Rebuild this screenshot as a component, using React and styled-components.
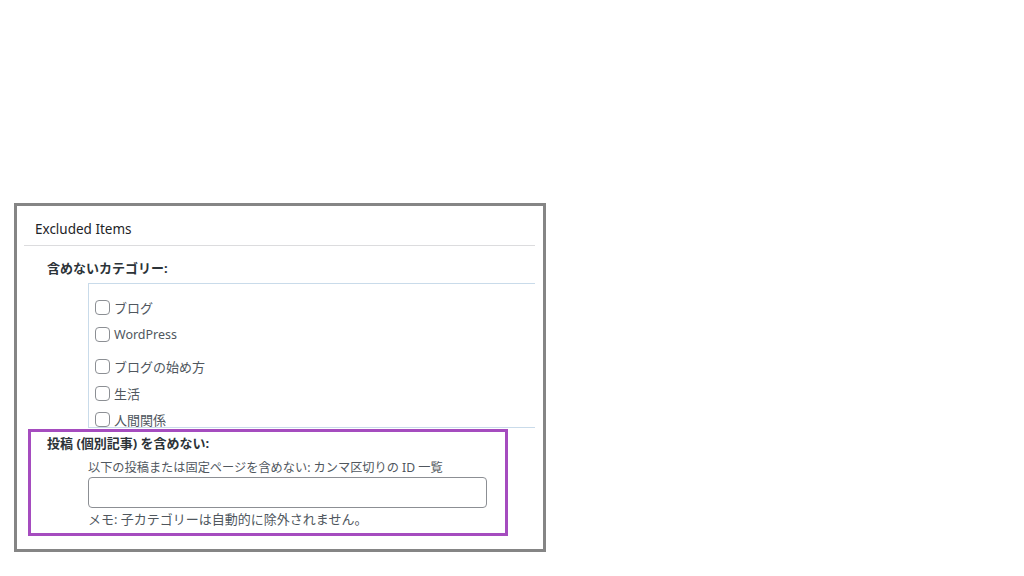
import React from 'react';
import styled, { createGlobalStyle } from 'styled-components';

const GlobalStyle = createGlobalStyle`
  html, body {
    margin: 0;
    padding: 0;
    background: #ffffff;
  }
  body {
    font-family: "Noto Sans", "Noto Sans CJK JP", sans-serif;
    color: #2c3338;
  }
`;

const Page = styled.div`
  width: 1024px;
  height: 576px;
  padding: 203px 0 0 14px;
  box-sizing: border-box;
`;

const Frame = styled.div`
  width: 532px;
  height: 349px;
  box-sizing: border-box;
  border: 3px solid #858585;
  background: #fff;
  padding: 0 8px 0 7px;
  overflow: hidden;
`;

const PanelHead = styled.div`
  height: 40px;
  box-sizing: border-box;
  padding: 14px 0 0 11px;
  border-bottom: 1px solid #dcdcde;
  font-size: 13.5px;
  line-height: 18px;
  color: #1d2327;
`;

const FieldLabel = styled.div`
  font-weight: bold;
  font-size: 13px;
  line-height: 18px;
  color: #2c3338;
  padding-left: ${p => p.$indent}px;
  margin-top: ${p => p.$top}px;
`;

const CategoryList = styled.div`
  margin: 6px 0 0 64px;
  height: 145px;
  border: 1px solid #c9dbea;
  border-right: none;
  box-sizing: border-box;
  padding: 14px 0 0 6px;
  overflow: hidden;
`;

const CheckRow = styled.label`
  display: flex;
  align-items: center;
  gap: 4px;
  height: 18px;
  margin-bottom: ${p => p.$gap}px;
  font-size: ${p => (p.$latin ? 12.5 : 13)}px;
  color: #50575e;
`;

const Box = styled.span`
  display: block;
  width: 15px;
  height: 15px;
  box-sizing: border-box;
  border: 1px solid #8c8f94;
  border-radius: 4px;
  background: #fff;
  flex: none;
`;

const Highlight = styled.div`
  margin: 1px 0 0 4px;
  width: 480px;
  height: 107px;
  box-sizing: border-box;
  border: 3px solid #a54cbf;
  padding-top: 2px;
`;

const Inner = styled.div`
  padding-left: 57px;
`;

const Hint = styled.div`
  font-size: ${p => p.$size}px;
  line-height: 16px;
  color: #50575e;
  margin-top: ${p => p.$top}px;
`;

const TextInput = styled.input`
  display: block;
  width: 399px;
  height: 31px;
  box-sizing: border-box;
  border: 1px solid #8c8f94;
  border-radius: 4px;
  margin: 1px 0 0 0;
  padding: 0 8px;
  font: inherit;
  outline: none;
`;

const categories = [
  { name: 'ブログ', gap: 9 },
  { name: 'WordPress', gap: 14, latin: true },
  { name: 'ブログの始め方', gap: 9 },
  { name: '生活', gap: 8 },
  { name: '人間関係', gap: 8 },
];

export default function App() {
  return (
    <Page>
      <GlobalStyle />
      <Frame>
        <PanelHead>Excluded Items</PanelHead>
        <FieldLabel $indent={23} $top={13}>含めないカテゴリー:</FieldLabel>
        <CategoryList>
          {categories.map(c => (
            <CheckRow key={c.name} $gap={c.gap} $latin={c.latin}>
              <Box />
              {c.name}
            </CheckRow>
          ))}
        </CategoryList>
        <Highlight>
          <FieldLabel $indent={16} $top={0}>投稿 (個別記事) を含めない:</FieldLabel>
          <Inner>
            <Hint $size={12.2} $top={8}>以下の投稿または固定ページを含めない: カンマ区切りの ID 一覧</Hint>
            <TextInput type="text" />
            <Hint $size={13} $top={3}>メモ: 子カテゴリーは自動的に除外されません。</Hint>
          </Inner>
        </Highlight>
      </Frame>
    </Page>
  );
}
